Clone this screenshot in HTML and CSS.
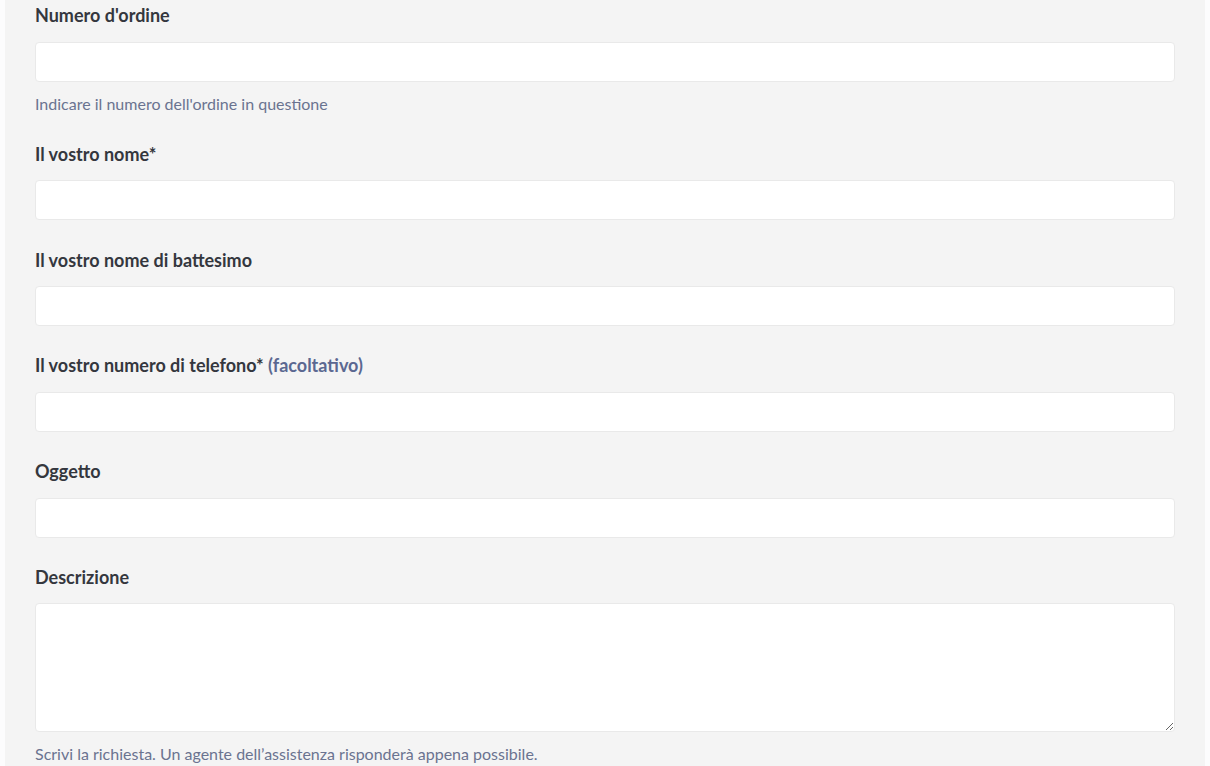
FILE: index.html
```html
<!DOCTYPE html>
<html lang="it">
<head>
  <meta charset="UTF-8">
  <title>Contatta l'assistenza</title>
  <link rel="stylesheet" href="styles.css">
</head>
<body>
  <div class="container">
    <form id="requestForm">
      <div class="field">
        <label for="orderNumber">Numero d'ordine</label>
        <input type="text" id="orderNumber" name="orderNumber">
        <p class="hint">Indicare il numero dell'ordine in questione</p>
      </div>
      <div class="field">
        <label for="lastName">Il vostro nome*</label>
        <input type="text" id="lastName" name="lastName" required>
      </div>
      <div class="field">
        <label for="firstName">Il vostro nome di battesimo</label>
        <input type="text" id="firstName" name="firstName">
      </div>
      <div class="field">
        <label for="phone">Il vostro numero di telefono* <span class="optional">(facoltativo)</span></label>
        <input type="text" id="phone" name="phone">
      </div>
      <div class="field">
        <label for="subject">Oggetto</label>
        <input type="text" id="subject" name="subject">
      </div>
      <div class="field">
        <label for="description">Descrizione</label>
        <textarea id="description" name="description"></textarea>
        <p class="hint">Scrivi la richiesta. Un agente dell’assistenza risponderà appena possibile.</p>
      </div>
    </form>
  </div>
</body>
</html>
```

FILE: styles.css
```css
/* Base */
* { box-sizing: border-box; }
body {
  font-family: Lato, "Open Sans", Arial, sans-serif;
  background: #fcfcfd;
  margin: 0;
  padding: 0;
}
.container {
  margin: 0 5px;
  background: #f4f4f4;
  padding: 3px 30px 40px;
  min-height: 766px;
}
.field {
  margin-bottom: 27.3px;
}
.field label {
  display: block;
  font-size: 18px;
  font-weight: bold;
  line-height: 24px;
  color: #34373e;
  margin-bottom: 14.5px;
}
.optional {
  color: #5b6891;
}
input[type="text"], textarea {
  display: block;
  width: 100%;
  height: 40px;
  padding: 8px 12px;
  font-family: inherit;
  font-size: 16px;
  background: #fff;
  border: 1px solid #e9e9e9;
  border-radius: 4px;
  margin: 0;
}
textarea {
  height: 129px;
  resize: vertical;
}
.hint {
  margin: 11px 0 0;
  font-size: 16px;
  line-height: 22px;
  color: #6a7390;
}
```
